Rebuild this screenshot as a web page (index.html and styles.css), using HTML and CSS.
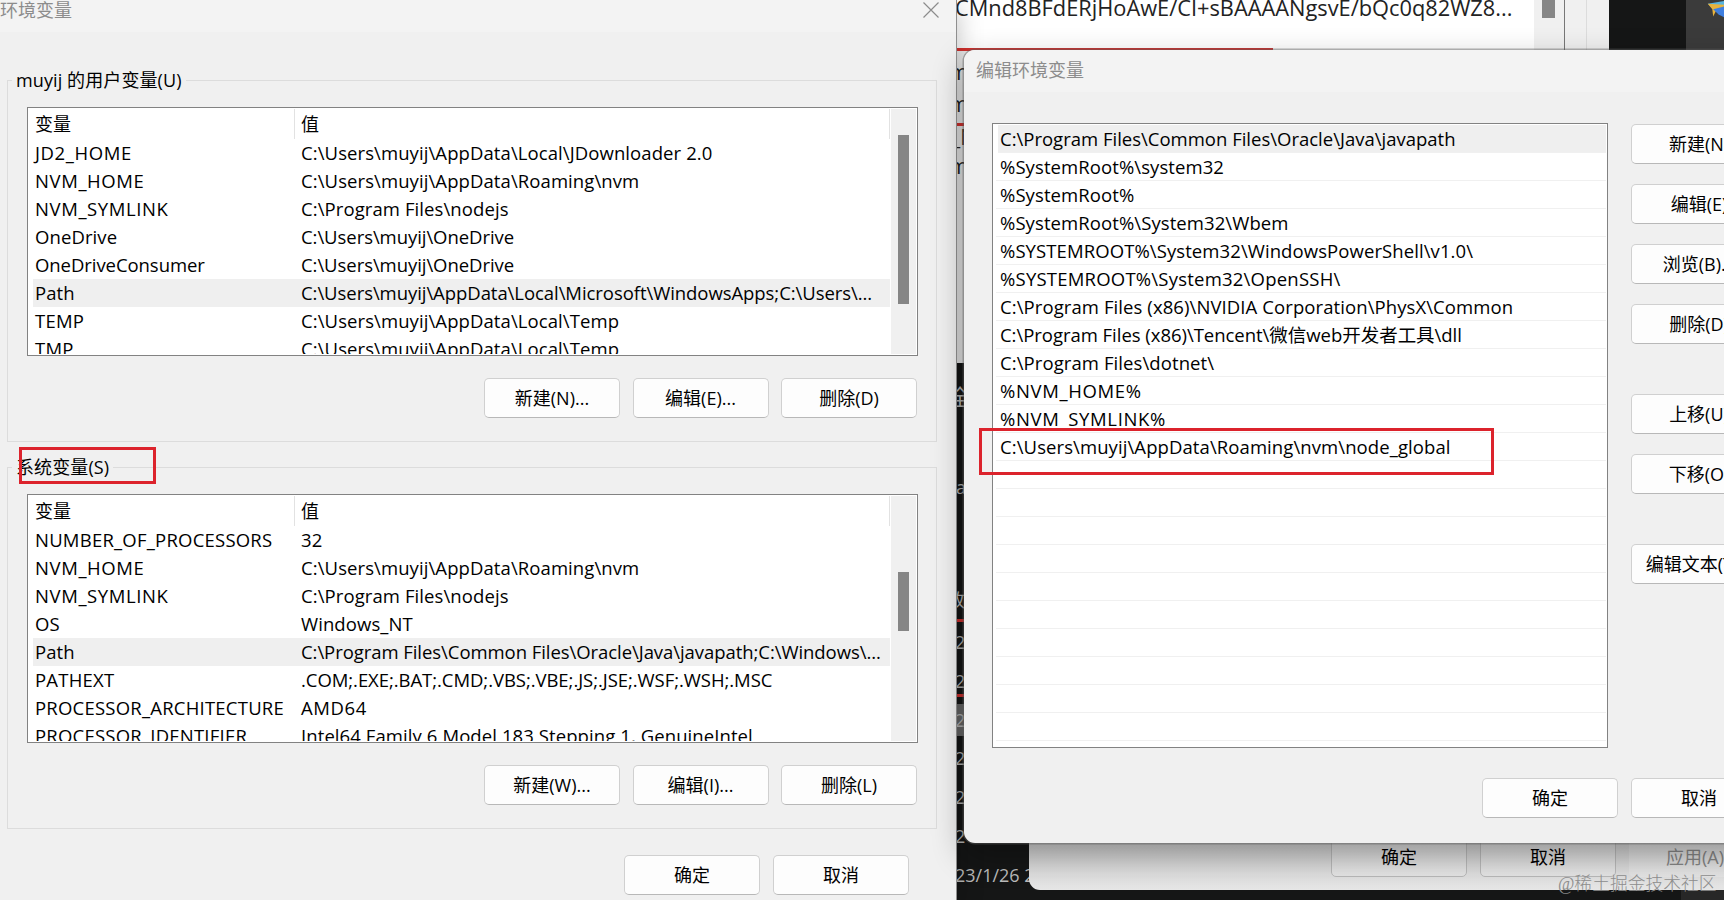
FILE: index.html
```
<!DOCTYPE html>
<html lang="zh-CN">
    <head>
        <meta charset="utf-8">
        <title>环境变量</title>
        <link rel="stylesheet" href="styles.css">
    </head>
    <body>
        <div class="desktop">
            <!-- Dark explorer window, only slivers of it show -->
            <div class="explorer">
                <div class="tab"></div>
                <svg class="bird" viewBox="0 0 20 22">
                    <path d="M2 3 L20 0 V7 L7 8 Z" fill="#58b4df"/>
                    <path d="M2 3 L20 4 V8 L11 11 L8 17 L7 9 Z" fill="#e9b33c"/>
                    <path d="M8 9 L20 6 V18 L14 15 Z" fill="#3f7fe0"/>
                </svg>
                <span class="frag f-all">全</span>
                <span class="frag f-a">a</span>
                <span class="frag f-mod">改</span>
                <i class="redline r1"></i>
                <i class="redline r2"></i>
                <div class="dates">
                    <span>2</span><span>2</span><span class="sel">2</span><span>2</span><span>2</span><span>2</span><span>23/1/26 20</span>
                </div>
                <div class="corner"></div>
            </div>

            <!-- System properties, behind the edit dialog -->
            <div class="props-top">
                <div class="value">CMnd8BFdERjHoAwE/CI+sBAAAANgsvE/bQc0q82WZ8...</div>
                <div class="track"><div class="thumb"></div></div>
                <div class="edge"></div>
            </div>
            <div class="props-side">
                <span class="frag m1">m</span>
                <span class="frag m2">m</span>
                <i class="redline r3"></i>
                <span class="frag m3">_N</span>
                <span class="frag m4">m</span>
            </div>
            <i class="topred"></i>
            <div class="props-bottom">
                <button>确定</button>
                <button>取消</button>
                <button class="disabled">应用(A)</button>
            </div>

            <!-- Environment variables -->
            <div class="window env">
                <div class="titlebar">
                    <span>环境变量</span>
                    <svg class="close" viewBox="0 0 16 16"><path d="M.5 .5 L15.5 15.5 M15.5 .5 L.5 15.5"/></svg>
                </div>
                <div class="group">
                    <div class="legend">muyij 的用户变量(U)</div>
                    <div class="list">
                        <div class="rows">
                            <div class="row head"><span>变量</span><span>值</span></div>
                            <div class="row"><span class="nvm">JD2_HOME</span><span>C:\Users\muyij\AppData\Local\JDownloader 2.0</span></div>
                            <div class="row"><span class="nvm">NVM_HOME</span><span>C:\Users\muyij\AppData\Roaming\nvm</span></div>
                            <div class="row"><span class="nvm">NVM_SYMLINK</span><span>C:\Program Files\nodejs</span></div>
                            <div class="row"><span>OneDrive</span><span class="tight">C:\Users\muyij\OneDrive</span></div>
                            <div class="row"><span class="tight">OneDriveConsumer</span><span class="tight">C:\Users\muyij\OneDrive</span></div>
                            <div class="row selected"><span>Path</span><span class="tight">C:\Users\muyij\AppData\Local\Microsoft\WindowsApps;C:\Users\...</span></div>
                            <div class="row"><span class="upper">TEMP</span><span>C:\Users\muyij\AppData\Local\Temp</span></div>
                            <div class="row"><span class="upper">TMP</span><span>C:\Users\muyij\AppData\Local\Temp</span></div>
                        </div>
                        <div class="scroll"><div class="thumb user"></div></div>
                    </div>
                    <div class="buttons">
                        <button>新建(N)...</button>
                        <button>编辑(E)...</button>
                        <button>删除(D)</button>
                    </div>
                </div>
                <div class="group">
                    <div class="legend">系统变量(S)</div>
                    <div class="list">
                        <div class="rows">
                            <div class="row head"><span>变量</span><span>值</span></div>
                            <div class="row"><span class="upper">NUMBER_OF_PROCESSORS</span><span>32</span></div>
                            <div class="row"><span class="nvm">NVM_HOME</span><span>C:\Users\muyij\AppData\Roaming\nvm</span></div>
                            <div class="row"><span class="nvm">NVM_SYMLINK</span><span>C:\Program Files\nodejs</span></div>
                            <div class="row"><span>OS</span><span>Windows_NT</span></div>
                            <div class="row selected"><span>Path</span><span class="tight">C:\Program Files\Common Files\Oracle\Java\javapath;C:\Windows\...</span></div>
                            <div class="row"><span class="upper">PATHEXT</span><span class="tight">.COM;.EXE;.BAT;.CMD;.VBS;.VBE;.JS;.JSE;.WSF;.WSH;.MSC</span></div>
                            <div class="row"><span class="upper">PROCESSOR_ARCHITECTURE</span><span class="nvm">AMD64</span></div>
                            <div class="row"><span class="upper">PROCESSOR_IDENTIFIER</span><span>Intel64 Family 6 Model 183 Stepping 1, GenuineIntel</span></div>
                        </div>
                        <div class="scroll"><div class="thumb system"></div></div>
                    </div>
                    <div class="buttons">
                        <button>新建(W)...</button>
                        <button>编辑(I)...</button>
                        <button>删除(L)</button>
                    </div>
                </div>
                <div class="footer">
                    <button>确定</button>
                    <button>取消</button>
                </div>
            </div>

            <!-- Edit environment variable -->
            <div class="window edit">
                <div class="titlebar"><span>编辑环境变量</span></div>
                <div class="content">
                    <div class="paths">
                        <div class="path selected">C:\Program Files\Common Files\Oracle\Java\javapath</div>
                        <div class="path">%SystemRoot%\system32</div>
                        <div class="path">%SystemRoot%</div>
                        <div class="path">%SystemRoot%\System32\Wbem</div>
                        <div class="path">%SYSTEMROOT%\System32\WindowsPowerShell\v1.0\</div>
                        <div class="path upper">%SYSTEMROOT%\System32\OpenSSH\</div>
                        <div class="path">C:\Program Files (x86)\NVIDIA Corporation\PhysX\Common</div>
                        <div class="path tight">C:\Program Files (x86)\Tencent\微信web开发者工具\dll</div>
                        <div class="path">C:\Program Files\dotnet\</div>
                        <div class="path nvm">%NVM_HOME%</div>
                        <div class="path nvm">%NVM_SYMLINK%</div>
                        <div class="path">C:\Users\muyij\AppData\Roaming\nvm\node_global</div>
                        <div class="path"></div>
                        <div class="path"></div>
                        <div class="path"></div>
                        <div class="path"></div>
                        <div class="path"></div>
                        <div class="path"></div>
                        <div class="path"></div>
                        <div class="path"></div>
                        <div class="path"></div>
                        <div class="path"></div>
                    </div>
                    <div class="actions">
                        <button>新建(N)</button>
                        <button>编辑(E)</button>
                        <button>浏览(B)...</button>
                        <button>删除(D)</button>
                        <button class="apart">上移(U)</button>
                        <button>下移(O)</button>
                        <button class="apart">编辑文本(T)...</button>
                    </div>
                </div>
                <div class="footer">
                    <button>确定</button>
                    <button>取消</button>
                </div>
            </div>

            <div class="mark mark-system"></div>
            <div class="mark mark-path"></div>
            <div class="watermark">@稀土掘金技术社区</div>
        </div>
    </body>
</html>
```
FILE: styles.css
```
* {
    box-sizing: border-box;
}
body {
    margin: 0;
    font-family: "Open Sans", "Noto Sans CJK SC", sans-serif;
    font-size: 18px;
    line-height: 28px;
    color: #000;
}
.desktop {
    position: relative;
    width: 1724px;
    height: 900px;
    overflow: hidden;
    background: #151616;
}
button {
    flex: none;
    width: 136px;
    height: 40px;
    padding: 0;
    background: #fdfdfd;
    border: 1px solid #d0d0d0;
    border-bottom-color: #b8b8b8;
    border-radius: 5px;
    font: inherit;
    color: #000;
    text-align: center;
    white-space: nowrap;
}

/* Windows */
.window {
    position: absolute;
    background: #f0f0f0;
}
.titlebar {
    display: flex;
    justify-content: space-between;
    background: #f3f3f3;
    color: #8c8c8c;
}
.env {
    left: 0;
    top: 0;
    width: 957px;
    height: 900px;
    border-right: 1px solid #8f8f8f;
    box-shadow: 0 8px 24px rgba(0, 0, 0, .25);
}
.env .titlebar {
    height: 32px;
    padding-right: 17px;
    line-height: 20px;
}
.close {
    width: 16px;
    height: 16px;
    margin-top: 2px;
    fill: none;
    stroke: #8c8c8c;
    stroke-width: 1.2;
}
.group {
    width: 930px;
    height: 362px;
    margin: 48px 0 0 7px;
    padding: 0 18px 0 19px;
    border: 1px solid #dcdcdc;
}
.group + .group {
    margin-top: 25px;
}
.legend {
    width: max-content;
    height: 28px;
    margin: -15px 0 13px -15px;
    padding: 0 4px;
    background: #f0f0f0;
    letter-spacing: .1px;
}
.list {
    display: flex;
    width: 891px;
    height: 249px;
    border: 1px solid #828282;
    background: #fff;
    padding: 1px 1px 1px 5px;
}
.rows {
    flex: 1;
    height: 245px;
    overflow: hidden;
}
.row {
    display: flex;
    height: 28px;
    padding-left: 2px;
    white-space: pre;
}
.row, .path {
    font-size: 18.5px;
    letter-spacing: .09px;
}
.row span:first-child {
    flex: none;
    width: 266px;
}
.row.head {
    height: 30px;
    line-height: 31px;
    font-size: 18px;
    border-right: 1px solid #e2e2e2;
}
.row.head span:first-child {
    width: 260px;
    margin-right: 6px;
    border-right: 1px solid #e2e2e2;
}
.nvm {
    letter-spacing: .6px;
}
.upper {
    letter-spacing: .22px;
}
.tight {
    letter-spacing: -.06px;
}
.selected {
    background: #efefef;
}
.scroll {
    width: 25px;
    margin-left: 1px;
    background: #f0f0f0;
}
.thumb {
    width: 11px;
    margin-left: 7px;
    background: #868686;
}
.thumb.user {
    height: 169px;
    margin-top: 26px;
}
.thumb.system {
    height: 59px;
    margin-top: 76px;
}
.buttons {
    display: flex;
    justify-content: flex-end;
    gap: 12.5px;
    margin: 22px 1px 0 0;
}
.env .footer {
    display: flex;
    justify-content: flex-end;
    gap: 13px;
    margin: 26px 47px 0 0;
}

.edit {
    left: 964px;
    top: 50px;
    width: 840px;
    height: 793px;
    border-radius: 11px;
    box-shadow: 0 0 0 1.5px rgba(90, 90, 90, .45), 0 12px 32px rgba(0, 0, 0, .32);
}
.edit .titlebar {
    height: 42px;
    padding-left: 12px;
    line-height: 41px;
    border-radius: 11px 0 0 0;
}
.content {
    display: flex;
    gap: 23px;
    padding: 31px 0 0 28px;
}
.paths {
    width: 616px;
    height: 625px;
    padding: 1px 1px 0 3px;
    border: 1px solid #828282;
    background: #fff;
    overflow: hidden;
}
.path {
    height: 28px;
    padding-left: 4px;
    border-bottom: 1px solid #f0f0f0;
    white-space: pre;
}
.path.upper {
    letter-spacing: .22px;
}
.path.nvm {
    letter-spacing: .65px;
}
.path.tight {
    letter-spacing: -.03px;
}
.path.selected {
    margin-left: 2px;
    padding-left: 2px;
    letter-spacing: 0;
}
.actions {
    display: flex;
    flex-direction: column;
    gap: 20px;
    padding-top: 1px;
}
.actions .apart {
    margin-top: 30px;
}
.edit .footer {
    display: flex;
    gap: 13px;
    margin: 30px 0 0 518px;
}

/* System properties */
.props-top {
    position: absolute;
    left: 957px;
    top: 0;
    width: 652px;
    height: 60px;
    display: flex;
    background: #f0f0f0;
}
.props-top .value {
    width: 577px;
    background: #fff;
    font-size: 21.8px;
    line-height: 15px;
    text-indent: -2px;
    white-space: pre;
    color: #222;
}
.props-top .track {
    width: 31px;
    border-right: 1px solid #777;
}
.props-top .thumb {
    width: 13px;
    height: 18px;
    margin-left: 8px;
}
.props-top .edge {
    width: 22px;
    border-right: 1px solid #dcdcdc;
}
.props-side {
    position: absolute;
    left: 957px;
    top: 50px;
    width: 30px;
    height: 313px;
    background: #f0f0f0;
}
.topred {
    position: absolute;
    left: 957px;
    top: 48px;
    width: 316px;
    height: 3px;
    background: #d8322f;
}
.props-bottom {
    position: absolute;
    left: 1029px;
    top: 800px;
    width: 720px;
    height: 90px;
    display: flex;
    gap: 13px;
    padding: 37px 0 0 302px;
    border-radius: 11px;
    background: linear-gradient(#cecece 45%, #e6e6e6);
}
.props-bottom button {
    background: rgba(255, 255, 255, .2);
    border-color: #b9b9b9;
}
.props-bottom button.disabled {
    width: 132px;
    color: #858585;
    border-color: transparent;
}

/* Explorer slivers */
.explorer {
    position: absolute;
    inset: 0;
}
.tab {
    position: absolute;
    right: 0;
    top: 0;
    width: 38px;
    height: 60px;
    background: #3b3b3b;
}
.bird {
    position: absolute;
    right: 0;
    top: 1px;
    width: 18px;
    height: 20px;
}
.corner {
    position: absolute;
    right: 0;
    bottom: 0;
    width: 43px;
    height: 12px;
    background: #272727;
}
.frag {
    position: absolute;
    color: #bbb;
}
.f-all {
    left: 949px;
    top: 382px;
    font-size: 22px;
}
.f-a {
    left: 956px;
    top: 473px;
}
.f-mod {
    left: 947px;
    top: 586px;
}
.props-side .frag {
    left: -8px;
    font-size: 21px;
    color: #222;
}
.m1 { top: 8px; }
.m2 { top: 40px; }
.props-side .m3 { top: 73px; left: -6px; }
.m4 { top: 102px; }
.redline {
    position: absolute;
    left: 957px;
    width: 8px;
    height: 3px;
    background: #d8322f;
}
.r1 { top: 619px; }
.r2 { top: 694px; }
.redline.r3 { left: 0; top: 73px; }
.dates {
    position: absolute;
    left: 955px;
    top: 623px;
    width: 76px;
    display: flex;
    flex-direction: column;
    line-height: 39px;
    font-size: 18px;
    color: #bbb;
    white-space: pre;
}
.dates span {
    height: 38.8px;
}
.dates .sel {
    background: linear-gradient(transparent 3px, #6b6b6b 3px, #6b6b6b 35px, transparent 35px);
}

/* Red annotation boxes */
.mark {
    position: absolute;
    border: 3px solid #dc232c;
}
.mark-system {
    left: 19px;
    top: 447px;
    width: 137px;
    height: 37px;
}
.mark-path {
    left: 979px;
    top: 428px;
    width: 515px;
    height: 47px;
}
.watermark {
    position: absolute;
    left: 1558px;
    top: 870px;
    font-family: "Liberation Serif", "Noto Sans CJK SC", serif;
    font-weight: 300;
    font-size: 17.8px;
    color: #8d8d8d;
    white-space: nowrap;
}
```
